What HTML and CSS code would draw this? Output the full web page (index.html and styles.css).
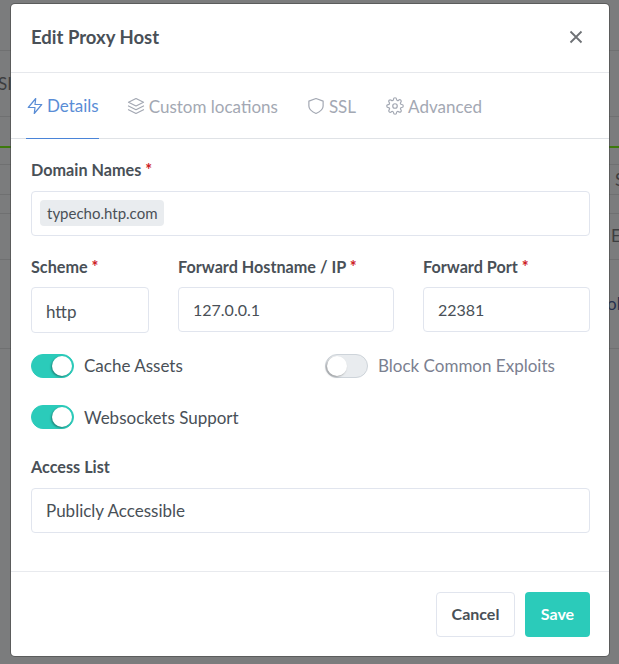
FILE: index.html
```html
<!DOCTYPE html>
<html lang="en">
<head>
<meta charset="utf-8">
<title>Edit Proxy Host</title>
<link rel="stylesheet" href="styles.css">
</head>
<body>
<div class="backdrop" aria-hidden="true">
  <i class="bg-line l1"></i><i class="bg-line l2"></i><i class="bg-line l3"></i><i class="bg-line l4"></i><i class="bg-line l5"></i><i class="bg-line l6"></i><i class="bg-line l7"></i>
  <i class="bg-green"></i>
  <span class="bg-text t1">SI</span><span class="bg-text t2">S</span><span class="bg-text t3">E</span><span class="bg-text t4">oli</span>
</div>
<div class="modal">
  <header class="modal-header">
    <h5 class="modal-title">Edit Proxy Host</h5>
    <svg class="close" viewBox="0 0 14 14" width="14" height="14"><path d="M1.5 1.5l11 11M12.5 1.5l-11 11"/></svg>
  </header>
  <nav class="tabs">
    <a class="tab active">
      <svg class="ico" viewBox="0 0 24 24"><path d="M13 2L3 14h9l-1 8 10-12h-9z"/></svg>Details</a>
    <a class="tab">
      <svg class="ico" viewBox="0 0 24 24"><path d="M12 2L2 7l10 5 10-5zM2 17l10 5 10-5M2 12l10 5 10-5"/></svg>Custom locations</a>
    <a class="tab tab-ssl">
      <svg class="ico" viewBox="0 0 24 24"><path d="M12 22s9.5-4 9.5-10V5.5L12 2 2.5 5.5V12c0 6 9.5 10 9.5 10z"/></svg>SSL</a>
    <a class="tab tab-adv">
      <svg class="ico" viewBox="0 0 24 24"><circle cx="12" cy="12" r="3"/><path d="M19.4 15a1.65 1.65 0 0 0 .33 1.82l.06.06a2 2 0 0 1 0 2.83 2 2 0 0 1-2.83 0l-.06-.06a1.65 1.65 0 0 0-1.82-.33 1.65 1.65 0 0 0-1 1.51V21a2 2 0 0 1-2 2 2 2 0 0 1-2-2v-.09A1.65 1.65 0 0 0 9 19.4a1.65 1.65 0 0 0-1.82.33l-.06.06a2 2 0 0 1-2.83 0 2 2 0 0 1 0-2.83l.06-.06a1.65 1.65 0 0 0 .33-1.82 1.65 1.65 0 0 0-1.51-1H3a2 2 0 0 1-2-2 2 2 0 0 1 2-2h.09A1.65 1.65 0 0 0 4.6 9a1.65 1.65 0 0 0-.33-1.82l-.06-.06a2 2 0 0 1 0-2.83 2 2 0 0 1 2.83 0l.06.06a1.65 1.65 0 0 0 1.82.33H9a1.65 1.65 0 0 0 1-1.51V3a2 2 0 0 1 2-2 2 2 0 0 1 2 2v.09a1.65 1.65 0 0 0 1 1.51 1.65 1.65 0 0 0 1.82-.33l.06-.06a2 2 0 0 1 2.83 0 2 2 0 0 1 0 2.83l-.06.06a1.65 1.65 0 0 0-.33 1.82V9a1.65 1.65 0 0 0 1.51 1H21a2 2 0 0 1 2 2 2 2 0 0 1-2 2h-.09a1.65 1.65 0 0 0-1.51 1z"/></svg>Advanced</a>
  </nav>
  <form class="modal-body">
    <div class="field domain-field">
      <label class="label">Domain Names <span class="req">*</span></label>
      <div class="input domain-input"><span class="chip">typecho.htp.com</span></div>
    </div>
    <div class="row-forward">
      <div class="field">
        <label class="label">Scheme <span class="req">*</span></label>
        <div class="input scheme">http</div>
      </div>
      <div class="field">
        <label class="label">Forward Hostname / IP <span class="req">*</span></label>
        <div class="input num">127.0.0.1</div>
      </div>
      <div class="field">
        <label class="label">Forward Port <span class="req">*</span></label>
        <div class="input num">22381</div>
      </div>
    </div>
    <div class="switches">
      <label class="switch-row"><span class="switch on"></span><span class="sw-text raised">Cache Assets</span></label>
      <label class="switch-row"><span class="switch"></span><span class="sw-text raised muted">Block Common Exploits</span></label>
      <label class="switch-row"><span class="switch on"></span><span class="sw-text">Websockets Support</span></label>
    </div>
    <div class="field access-field">
      <label class="label">Access List</label>
      <div class="input">Publicly Accessible</div>
    </div>
  </form>
  <footer class="modal-footer">
    <button class="btn cancel" type="button">Cancel</button>
    <button class="btn save" type="button">Save</button>
  </footer>
</div>
</body>
</html>
```
FILE: styles.css
```css
* { box-sizing: border-box; }
html, body { margin: 0; height: 100%; }
body {
  width: 619px;
  height: 664px;
  overflow: hidden;
  position: relative;
  background: #7b7c7d;
  font-family: "Lato", sans-serif;
  font-size: 17px;
  color: #495057;
  padding: 4px 10px 0 11px;
}
.backdrop { position: absolute; inset: 0; }
.bg-line { position: absolute; left: 0; right: 0; height: 1px; background: #6f7071; }
.l1 { top: 50px; } .l2 { top: 116px; } .l3 { top: 164px; } .l4 { top: 194px; }
.l5 { top: 213px; } .l6 { top: 259px; } .l7 { top: 348px; }
.bg-green { position: absolute; left: 0; right: 0; top: 146px; height: 2px; background: #3d7a0c; }
.bg-text { position: absolute; font-size: 17px; line-height: 20px; color: #3d3e40; }
.t1 { left: -2px; top: 74px; }
.t2 { left: 615px; top: 170px; }
.t3 { left: 611px; top: 226px; }
.t4 { left: 607px; top: 294px; color: #25304d; }

.modal {
  position: relative;
  width: 598px;
  height: 652px;
  background: #fff;
  border-radius: 4px;
  display: flex;
  flex-direction: column;
  box-shadow: 0 0 0 1px rgba(60, 60, 60, .5);
}
.modal-header {
  height: 69px;
  flex: none;
  display: flex;
  align-items: center;
  justify-content: space-between;
  padding: 0 26px 2px 20px;
  border-bottom: 1px solid #e6e8ec;
}
.modal-title { margin: 0; font-size: 18.5px; font-weight: 700; color: #495057; }
.close { fill: none; stroke: #6e7175; stroke-width: 1.8; }
.tabs {
  height: 66px;
  flex: none;
  display: flex;
  padding-left: 15px;
  gap: 28px;
  border-bottom: 1px solid #dfe2e6;
}
.tab {
  display: flex;
  align-items: center;
  gap: 4px;
  color: #a3a8b3;
  font-size: 17px;
  height: 66px;
}
.tab.active { color: #5a8dd6; border-bottom: 1px solid #4a84d8; gap: 3px; }
.tab-ssl { margin-left: 1px; }
.tab-adv { margin-left: 2px; }
.ico { width: 18px; height: 18px; fill: none; stroke: currentColor; stroke-width: 1.6; stroke-linejoin: round; stroke-linecap: round; flex: none; }
.modal-body {
  flex: 1;
  padding: 21px 19px 0 20px;
  display: flex;
  flex-direction: column;
}
.field { display: flex; flex-direction: column; }
.label { font-size: 16.2px; line-height: 20px; font-weight: 700; color: #495057; margin-bottom: 10px; }
.domain-field .label, .access-field .label { margin-bottom: 11px; }
.req { color: #cd201f; }
.input {
  height: 45px;
  border: 1px solid #e1e5ee;
  border-radius: 4px;
  padding: 0 14px;
  display: flex;
  align-items: center;
  font-size: 17px;
  color: #495057;
}
.input.num { font-size: 16px; }
.domain-input { padding: 0 8px; }
.chip {
  background: #e9ecef;
  border-radius: 4px;
  height: 26px;
  margin-bottom: 1px;
  padding: 0 7px;
  display: flex;
  align-items: center;
  font-size: 15px;
}
.domain-field { margin-bottom: 21px; }
.row-forward {
  display: grid;
  grid-template-columns: 118px 216px 167px;
  column-gap: 29px;
  margin-bottom: 21px;
}
.row-forward .scheme { height: 46px; padding-top: 3px; }
.switches {
  display: grid;
  grid-template-columns: 294px 1fr;
  row-gap: 27px;
  margin-bottom: 28px;
}
.switch-row { display: flex; align-items: center; gap: 10px; height: 24px; }
.switch {
  position: relative;
  width: 43px;
  height: 24px;
  border-radius: 12px;
  background: #e9ecef;
  border: 1px solid #ced4da;
  flex: none;
}
.switch::after {
  content: "";
  position: absolute;
  left: 1px;
  top: 1px;
  width: 20px;
  height: 20px;
  border-radius: 50%;
  background: #fff;
  box-shadow: -1px 1px 2px rgba(0,0,0,.35);
}
.switch.on { background: #2bcbba; border-color: #2bcbba; }
.switch.on::after { left: 20px; }
.sw-text { font-size: 17px; color: #495057; }
.sw-text.raised { margin-bottom: 2px; }
.sw-text.muted { color: #7b8090; }
.modal-footer {
  height: 85px;
  flex: none;
  border-top: 1px solid #e8eaee;
  display: flex;
  justify-content: flex-end;
  gap: 10px;
  padding: 20px 19px 0 0;
}
.btn {
  height: 45px;
  border-radius: 4px;
  font-family: inherit;
  font-size: 16px;
  font-weight: 700;
  padding: 0 0 2px;
  border: 1px solid transparent;
}
.cancel { width: 79px; background: #fff; border-color: #e1e5ee; color: #495057; }
.save { width: 65px; background: #2bcbba; color: #fff; }
```
